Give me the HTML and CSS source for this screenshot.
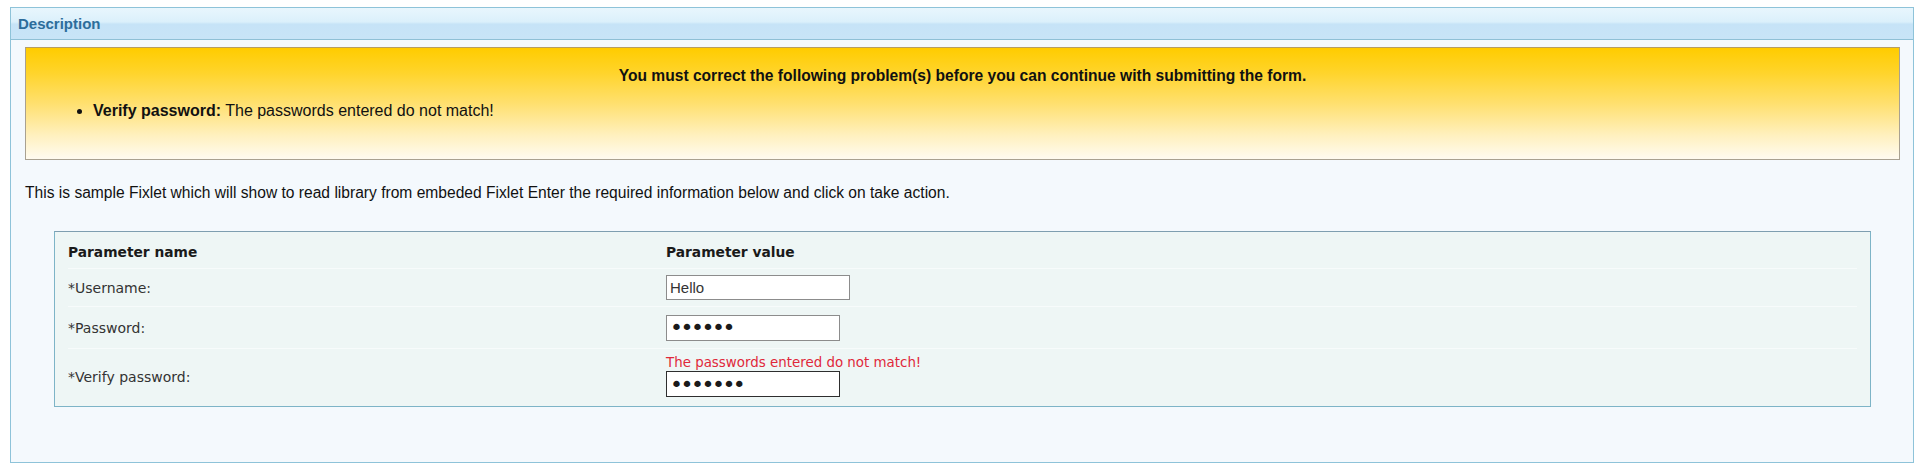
FILE: index.html
```html
<!DOCTYPE html>
<html lang="en">
<head>
<meta charset="utf-8">
<title>Description</title>
<link rel="stylesheet" href="styles.css">
</head>
<body>
<section class="panel">
  <header class="panel-head">Description</header>
  <div class="panel-body">
    <div class="alert">
      <p class="alert-title">You must correct the following problem(s) before you can continue with submitting the form.</p>
      <ul class="alert-list">
        <li><b>Verify password:</b> The passwords entered do not match!</li>
      </ul>
    </div>
    <p class="intro">This is sample Fixlet which will show to read library from embeded Fixlet Enter the required information below and click on take action.</p>
    <div class="params">
      <div class="row row-head">
        <div class="cell-name">Parameter name</div>
        <div class="cell-value">Parameter value</div>
      </div>
      <div class="row row-user">
        <div class="cell-name">*Username:</div>
        <div class="cell-value"><input class="field field-wide" type="text" value="Hello"></div>
      </div>
      <div class="row row-pass">
        <div class="cell-name">*Password:</div>
        <div class="cell-value"><input class="field field-pass" type="password" value="secret"></div>
      </div>
      <div class="row row-verify">
        <div class="cell-name">*Verify password:</div>
        <div class="cell-value">
          <div class="err">The passwords entered do not match!</div>
          <input class="field field-pass field-error" type="password" value="secrets">
        </div>
      </div>
    </div>
  </div>
</section>
</body>
</html>
```
FILE: styles.css
```css
html, body {
  margin: 0;
  padding: 0;
  background: #ffffff;
}
body {
  font-family: "Liberation Sans", Arial, sans-serif;
  font-size: 15.6px;
  color: #111;
}
.panel {
  margin: 7px 6px 0 10px;
  height: 454px;
  border: 1px solid #8ec3d9;
  background: #f4f9fd;
  display: flex;
  flex-direction: column;
}
.panel-head {
  height: 31px;
  border-bottom: 1px solid #8fc0d6;
  background: linear-gradient(#e8f6fd 0%, #dbf0fb 45%, #c6e3f7 52%, #c8e4f7 100%);
  color: #2d6d9b;
  font-weight: bold;
  font-size: 15px;
  line-height: 31px;
  padding-left: 7px;
}
.panel-body {
  padding: 7px 13px 0 14px;
}
.alert {
  height: 111px;
  border: 1px solid #a9a190;
  border-top-color: #b59e63;
  background: linear-gradient(#ffcc00 0%, #ffd42a 22%, #ffe06f 50%, #fff0bd 78%, #fffbf0 100%);
}
.alert-title {
  margin: 19px 0 0;
  text-align: center;
  font-weight: bold;
  font-size: 15.6px;
  line-height: 18px;
}
.alert-list {
  margin: 17px 0 0;
  padding-left: 67px;
  font-size: 16px;
  line-height: 18px;
}
.intro {
  margin: 24px 0 0;
  line-height: 18px;
}
.params {
  margin: 29px 29px 0;
  border: 1px solid #7db4c7;
  border-top-color: #7e9eb0;
  background: #eef6f5;
  padding: 0 13px 2px;
  font-family: "DejaVu Sans", Verdana, sans-serif;
  font-size: 14px;
  color: #333;
}
.row {
  display: grid;
  grid-template-columns: 598px 1fr;
  align-items: center;
}
.row + .row {
  border-top: 1px solid #f7fbfb;
}
.row-head {
  height: 36px;
  align-items: start;
  padding-top: 12px;
  box-sizing: border-box;
  font-weight: bold;
  font-size: 13.8px;
  color: #1a1a1a;
  line-height: 16px;
}
.row-user { height: 37px; }
.row-pass { height: 41px; }
.row-verify { height: 55px; }
.cell-name { line-height: 16px; }
.field {
  display: block;
  box-sizing: border-box;
  width: 174px;
  height: 26px;
  margin: 0;
  padding: 0 3px;
  border: 1px solid #8c8c8c;
  background: #fff;
  font-family: "Liberation Sans", Arial, sans-serif;
  font-size: 15px;
  color: #333;
  outline: none;
}
.field-wide {
  width: 184px;
  height: 25px;
}
.field-pass {
  font-family: "DejaVu Sans", sans-serif;
  font-size: 22px;
  letter-spacing: -2.5px;
  color: #1a1a1a;
  padding: 0 3px;
}
.field-error {
  border-color: #2e2e2e;
}
.err {
  color: #e0283a;
  font-size: 13.4px;
  line-height: 14px;
  margin-bottom: 1px;
}
```
